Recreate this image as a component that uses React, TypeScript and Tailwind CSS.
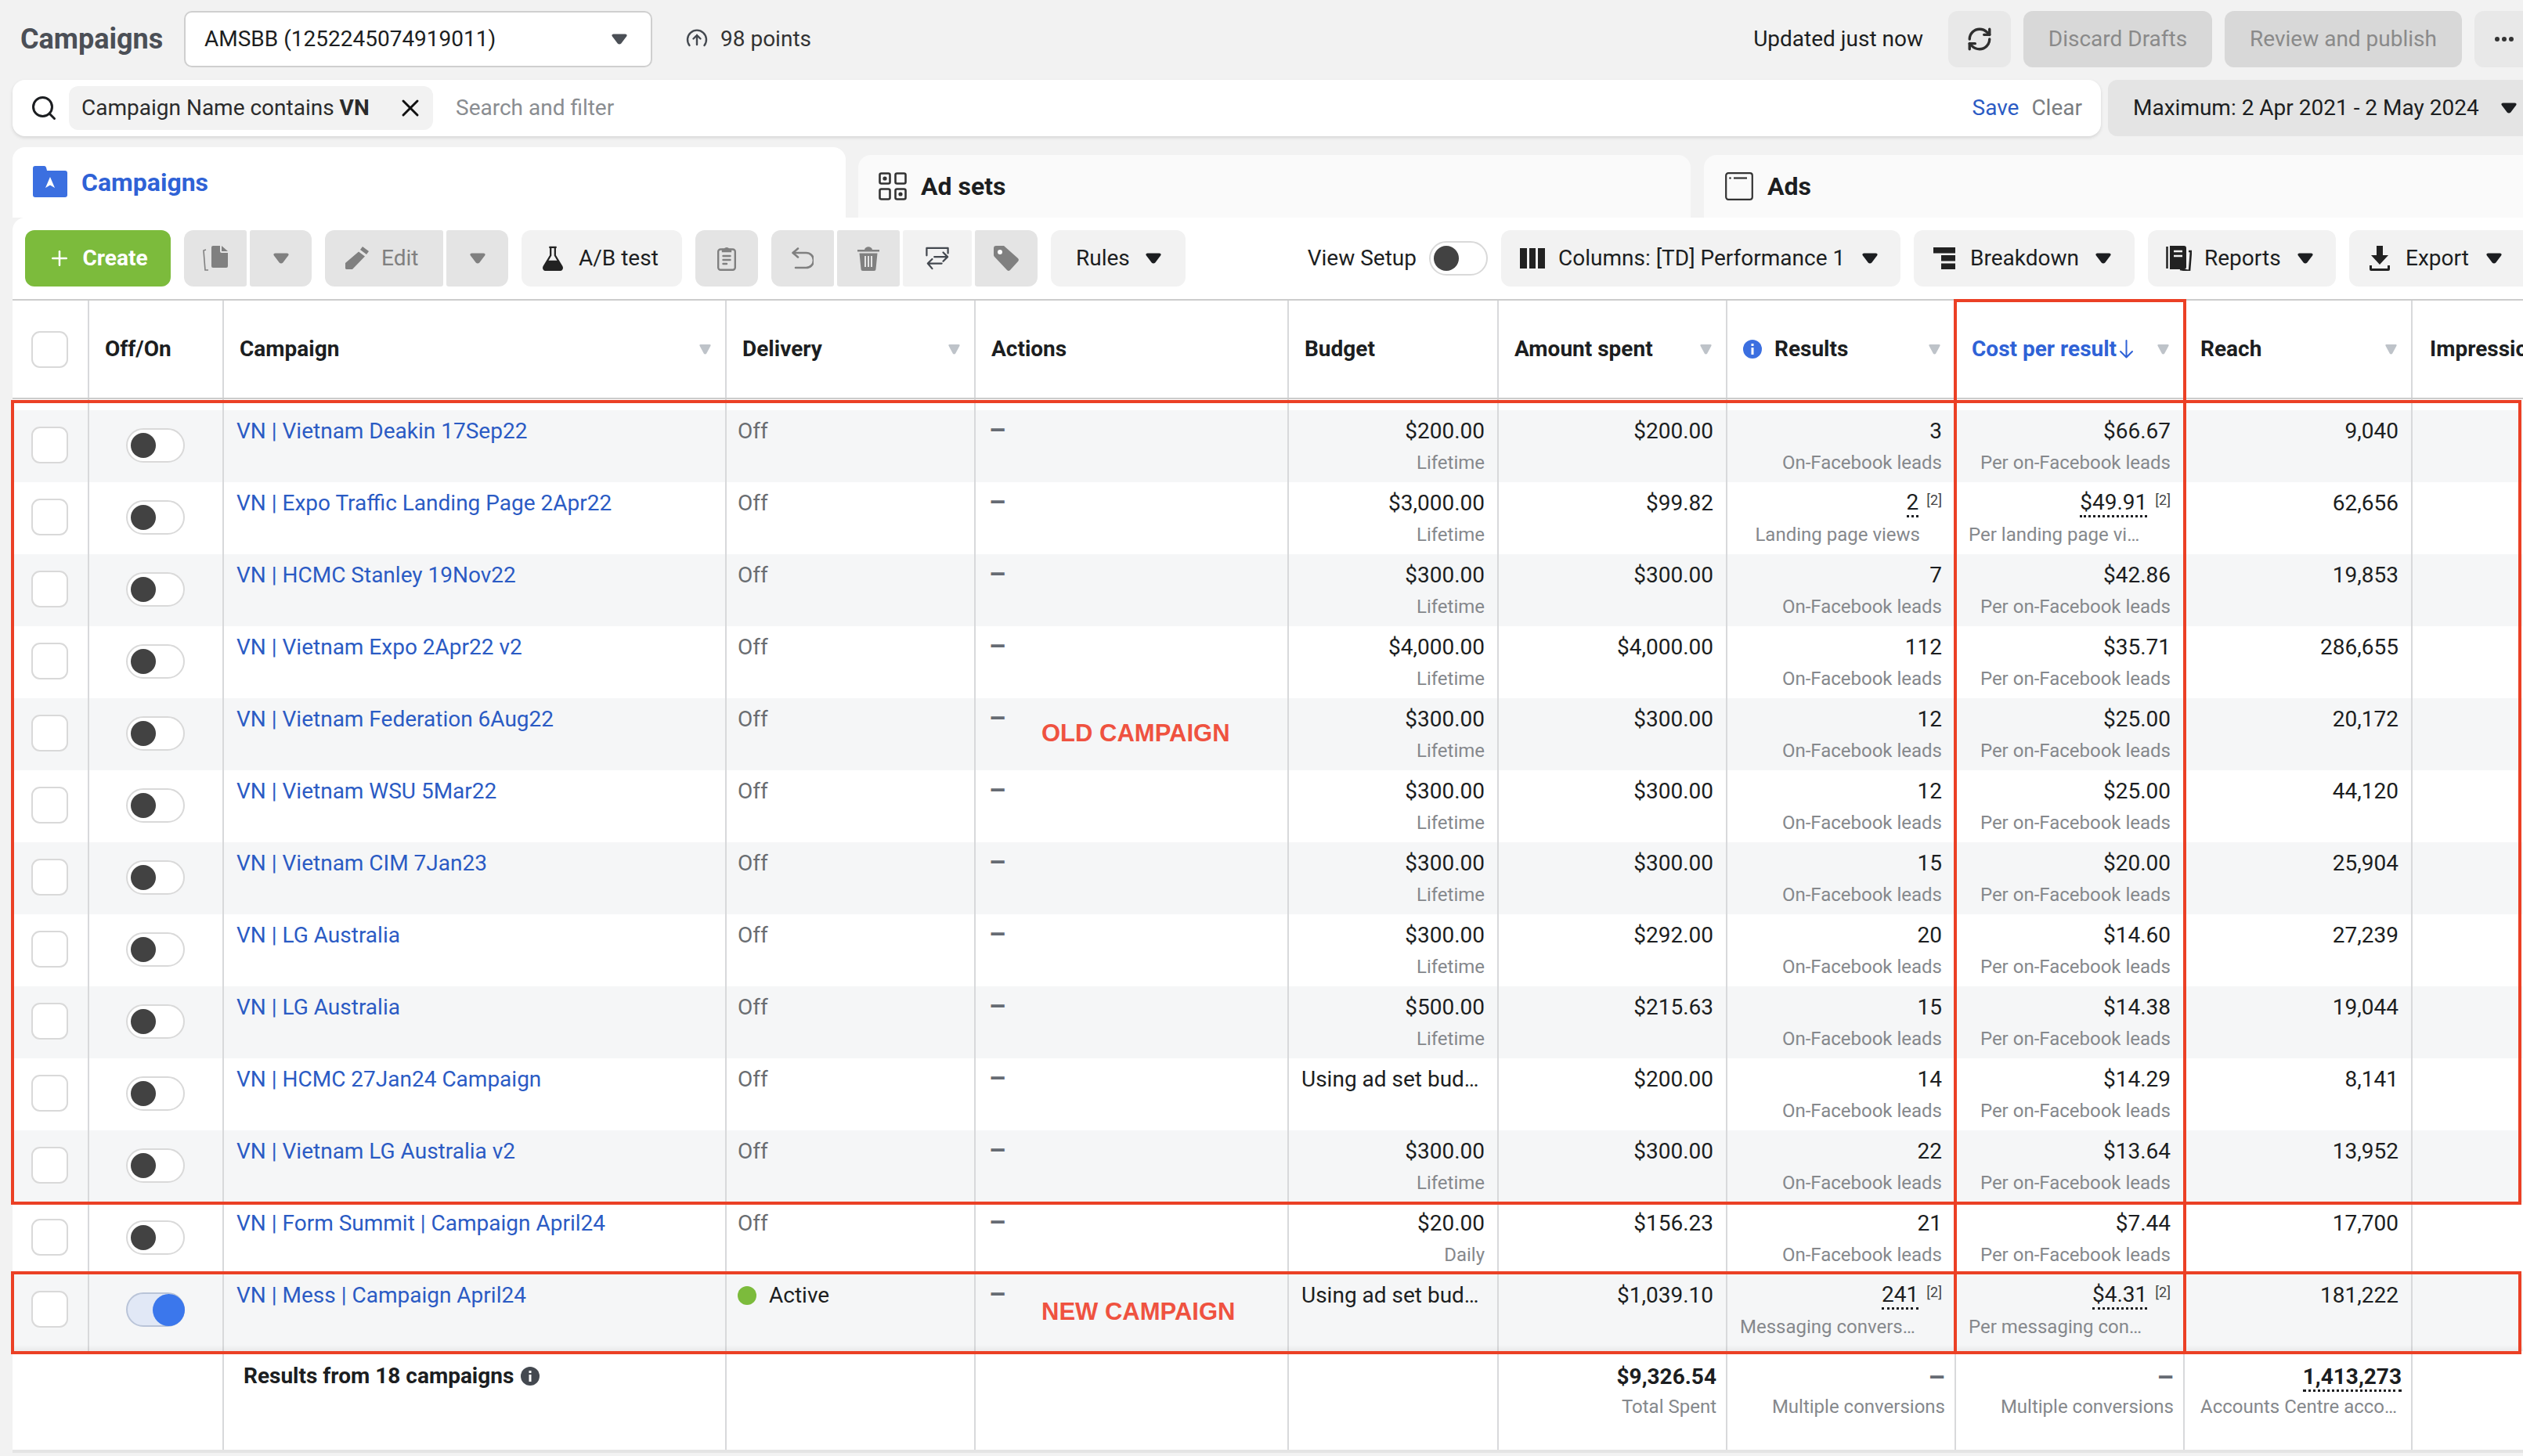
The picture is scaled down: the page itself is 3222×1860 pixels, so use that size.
import React from 'react';
import { Plus, RefreshCw, Search, X } from 'lucide-react';

const COLS = 'grid grid-cols-[98px_172px_642px_318px_400px_268px_292px_292px_292px_291px_141px]';
const CELL = 'border-r-2 border-[#d8d9db]';

type Row = {
  name: string;
  budget: string;
  budgetSub?: string;
  spent: string;
  results: string;
  resultsSub: string;
  cost: string;
  costSub: string;
  reach: string;
  note?: boolean;
};

const rows: Row[] = [
  { name: 'VN | Vietnam Deakin 17Sep22', budget: '$200.00', budgetSub: 'Lifetime', spent: '$200.00', results: '3', resultsSub: 'On-Facebook leads', cost: '$66.67', costSub: 'Per on-Facebook leads', reach: '9,040' },
  { name: 'VN | Expo Traffic Landing Page 2Apr22', budget: '$3,000.00', budgetSub: 'Lifetime', spent: '$99.82', results: '2', resultsSub: 'Landing page views', cost: '$49.91', costSub: 'Per landing page vi…', reach: '62,656', note: true },
  { name: 'VN | HCMC Stanley 19Nov22', budget: '$300.00', budgetSub: 'Lifetime', spent: '$300.00', results: '7', resultsSub: 'On-Facebook leads', cost: '$42.86', costSub: 'Per on-Facebook leads', reach: '19,853' },
  { name: 'VN | Vietnam Expo 2Apr22 v2', budget: '$4,000.00', budgetSub: 'Lifetime', spent: '$4,000.00', results: '112', resultsSub: 'On-Facebook leads', cost: '$35.71', costSub: 'Per on-Facebook leads', reach: '286,655' },
  { name: 'VN | Vietnam Federation 6Aug22', budget: '$300.00', budgetSub: 'Lifetime', spent: '$300.00', results: '12', resultsSub: 'On-Facebook leads', cost: '$25.00', costSub: 'Per on-Facebook leads', reach: '20,172' },
  { name: 'VN | Vietnam WSU 5Mar22', budget: '$300.00', budgetSub: 'Lifetime', spent: '$300.00', results: '12', resultsSub: 'On-Facebook leads', cost: '$25.00', costSub: 'Per on-Facebook leads', reach: '44,120' },
  { name: 'VN | Vietnam CIM 7Jan23', budget: '$300.00', budgetSub: 'Lifetime', spent: '$300.00', results: '15', resultsSub: 'On-Facebook leads', cost: '$20.00', costSub: 'Per on-Facebook leads', reach: '25,904' },
  { name: 'VN | LG Australia', budget: '$300.00', budgetSub: 'Lifetime', spent: '$292.00', results: '20', resultsSub: 'On-Facebook leads', cost: '$14.60', costSub: 'Per on-Facebook leads', reach: '27,239' },
  { name: 'VN | LG Australia', budget: '$500.00', budgetSub: 'Lifetime', spent: '$215.63', results: '15', resultsSub: 'On-Facebook leads', cost: '$14.38', costSub: 'Per on-Facebook leads', reach: '19,044' },
  { name: 'VN | HCMC 27Jan24 Campaign', budget: 'Using ad set bud…', spent: '$200.00', results: '14', resultsSub: 'On-Facebook leads', cost: '$14.29', costSub: 'Per on-Facebook leads', reach: '8,141' },
  { name: 'VN | Vietnam LG Australia v2', budget: '$300.00', budgetSub: 'Lifetime', spent: '$300.00', results: '22', resultsSub: 'On-Facebook leads', cost: '$13.64', costSub: 'Per on-Facebook leads', reach: '13,952' },
  { name: 'VN | Form Summit | Campaign April24', budget: '$20.00', budgetSub: 'Daily', spent: '$156.23', results: '21', resultsSub: 'On-Facebook leads', cost: '$7.44', costSub: 'Per on-Facebook leads', reach: '17,700' },
  { name: 'VN | Mess | Campaign April24', budget: 'Using ad set bud…', spent: '$1,039.10', results: '241', resultsSub: 'Messaging convers…', cost: '$4.31', costSub: 'Per messaging con…', reach: '181,222', note: true },
];

// ellipsised labels sit flush left in the real table
const cut = (s?: string) => !!s && s.endsWith('…');

function Caret({ color = '#1c1e21', className = '' }: { color?: string; className?: string }) {
  return (
    <svg viewBox="0 0 20 14" className={`h-[14px] w-[20px] shrink-0 ${className}`}>
      <path d="M2.5 0.5h15c2 0 2.6 1.6 1.6 3l-6.8 9c-1.2 1.4-3.4 1.4-4.6 0l-6.8-9c-1-1.4-0.4-3 1.6-3z" fill={color} />
    </svg>
  );
}

function SortCaret() {
  return (
    <svg viewBox="0 0 15 14" className="h-[14px] w-[15px]">
      <path d="M1.5 1h12c1 0 1.4 0.8 1 1.8l-5.4 10c-0.7 1-2.5 1-3.2 0l-5.4-10c-0.4-1 0-1.8 1-1.8z" fill="#bec3c9" />
    </svg>
  );
}

function Btn({ w, light, round = 'rounded-xl', className = '', children }: { w: string; light?: boolean; round?: string; className?: string; children?: React.ReactNode }) {
  return (
    <div className={`flex h-[72px] shrink-0 items-center ${w} ${round} ${light ? 'bg-[#f2f2f2]' : 'bg-[#e4e4e4]'} ${className}`}>
      {children}
    </div>
  );
}

function Toggle({ on }: { on?: boolean }) {
  if (on) {
    return (
      <div className="flex h-[44px] w-[75px] items-center justify-end rounded-full border-2 border-[#b9c4d8] bg-[#e1e8f6]">
        <div className="-mr-[2px] h-[41px] w-[41px] rounded-full bg-[#3b77ec]" />
      </div>
    );
  }
  return (
    <div className="flex h-[44px] w-[75px] items-center rounded-full border-2 border-[#d9d9d9] bg-white pl-[4px]">
      <div className="h-[32px] w-[32px] rounded-full bg-[#424242]" />
    </div>
  );
}

function Checkbox() {
  return <div className="h-[47px] w-[47px] rounded-[11px] border-2 border-[#d9d9d9] bg-white" />;
}

function Num({ value, note }: { value: string; note?: boolean }) {
  if (!note) return <div className={`h-[36px] text-[28px] leading-[36px] text-[#1c1e21] ${cut(value) ? 'pl-[4px] text-left' : ''}`}>{value}</div>;
  return (
    <div className="flex h-[36px] items-start justify-end gap-[10px] text-[28px] leading-[36px] text-[#1c1e21]">
      <span className="h-[36px] border-b-[3px] border-dotted border-[#1c1e21] leading-[34px]">{value}</span>
      <span className="mt-[-4px] text-[18px] leading-[36px] text-[#444]">[2]</span>
    </div>
  );
}

function MetricCell({ value, sub, note }: { value: string; sub?: string; note?: boolean }) {
  return (
    <div className={`pl-[12px] pr-[16px] pt-[9px] text-right ${CELL}`}>
      <Num value={value} note={note} />
      {sub && (
        <div className={`mt-[6px] whitespace-nowrap text-[24px] leading-[32px] text-[#85888c] ${cut(sub) ? 'pl-[4px] text-left' : note ? 'pr-[28px]' : ''}`}>{sub}</div>
      )}
    </div>
  );
}

function HeaderCell({ label, sort = true, className = '', children }: { label?: string; sort?: boolean; className?: string; children?: React.ReactNode }) {
  return (
    <div className={`flex items-center justify-between pl-[20px] pr-[18px] ${CELL} ${className}`}>
      <div className="flex items-center whitespace-nowrap text-[28px] font-bold text-[#1c1e21]">
        {children}
        {label}
      </div>
      {sort && <SortCaret />}
    </div>
  );
}

function FooterCell({ value, sub, strong, dotted }: { value: string; sub: string; strong?: boolean; dotted?: boolean }) {
  return (
    <div className={`pl-[20px] pr-[12px] pt-[15px] text-right ${CELL}`}>
      <div className="h-[36px] text-[28px] leading-[36px]">
        {strong ? (
          <span className={`font-bold text-[#1c1e21] ${dotted ? 'border-b-[3px] border-dotted border-[#1c1e21]' : ''}`}>{value}</span>
        ) : (
          <span className="text-[34px] font-bold text-[#666b73]">{value}</span>
        )}
      </div>
      <div className={`mt-[4px] whitespace-nowrap text-[24px] leading-[32px] text-[#85888c] ${cut(sub) ? 'text-left' : ''}`}>{sub}</div>
    </div>
  );
}

export default function App() {
  return (
    <div className="relative h-[1860px] w-[3222px] overflow-hidden bg-[#f2f2f2] font-[family-name:Roboto,sans-serif] text-[#1c1e21]">
      {/* top bar */}
      <div className="flex h-[102px] items-start pt-[14px]">
        <div className="ml-[26px] flex h-[72px] w-[209px] items-center text-[36px] font-bold text-[#4b4f56]">Campaigns</div>
        <div className="flex h-[72px] w-[598px] items-center justify-between rounded-[10px] border-2 border-[#cfcfcf] bg-white pl-[24px] pr-[30px] text-[28px]">
          AMSBB (1252245074919011)
          <Caret color="#4b4f56" />
        </div>
        <div className="ml-[43px] flex h-[72px] items-center text-[28px] text-[#333]">
          <svg viewBox="0 0 28 28" className="mr-[16px] h-[28px] w-[28px]" fill="none" stroke="#444950" strokeWidth="2.4" strokeLinecap="round">
            <path d="M4.5 22a12 12 0 1 1 19 0" />
            <path d="M14 21V9M9.5 13.5 14 9l4.5 4.5" />
          </svg>
          98 points
        </div>
        <div className="ml-auto flex h-[72px] items-center text-[28px]">Updated just now</div>
        <Btn w="w-[80px]" className="ml-[32px] justify-center !bg-[#e8e8e8]">
          <RefreshCw size={34} strokeWidth={2.4} color="#2f2f2f" />
        </Btn>
        <Btn w="w-[241px]" className="ml-[16px] justify-center !bg-[#d8d8d8] text-[28px] text-[#8a8a8a]">Discard Drafts</Btn>
        <Btn w="w-[303px]" className="ml-[16px] justify-center !bg-[#d8d8d8] text-[28px] text-[#8a8a8a]">Review and publish</Btn>
        <Btn w="w-[62px]" round="rounded-l-xl" className="ml-[16px] justify-start gap-[3px] !bg-[#e8e8e8] pl-[26px]">
          <span className="h-[6px] w-[6px] rounded-full bg-[#333]" />
          <span className="h-[6px] w-[6px] rounded-full bg-[#333]" />
          <span className="h-[6px] w-[6px] rounded-full bg-[#333]" />
        </Btn>
      </div>

      {/* search */}
      <div className="flex h-[72px] pl-[16px]">
        <div className="flex w-[2667px] items-center rounded-2xl bg-white pr-[24px] shadow-[0_2px_4px_rgba(0,0,0,0.12)]">
          <Search size={36} strokeWidth={2} className="ml-[22px] mr-[14px]" color="#1c1e21" />
          <div className="flex h-[56px] w-[465px] items-center rounded-xl bg-[#f2f2f2] pl-[16px] text-[28px] text-[#2b2b2b]">
            Campaign Name contains&nbsp;<b>VN</b>
            <X size={36} strokeWidth={2} className="ml-[34px]" color="#111" />
          </div>
          <div className="ml-[29px] text-[28px] text-[#8a8d91]">Search and filter</div>
          <div className="ml-auto text-[28px] text-[#2b5bc4]">Save</div>
          <div className="ml-[16px] text-[28px] text-[#7a7d81]">Clear</div>
        </div>
        <div className="ml-[9px] flex flex-1 items-center rounded-l-xl bg-[#e4e4e4] pl-[32px] text-[28px]">
          Maximum: 2 Apr 2021 - 2 May 2024
          <Caret className="ml-[28px]" />
        </div>
      </div>

      {/* tabs */}
      <div className="flex h-[104px] items-end pb-0 pl-[16px]">
        <div className="flex h-[90px] w-[1064px] items-start rounded-t-2xl bg-white pl-[26px] pt-[24px]">
          <svg viewBox="0 0 44 40" className="h-[40px] w-[44px]">
            <path d="M0 3a3 3 0 0 1 3-3h11a3 3 0 0 1 3 2l1 4h23a3 3 0 0 1 3 3v28a3 3 0 0 1-3 3H3a3 3 0 0 1-3-3z" fill="#3b6fe0" />
            <path d="M22 14l6 14-6-3.5-6 3.5z" fill="#fff" />
          </svg>
          <span className="ml-[18px] text-[32px] font-bold leading-[42px] text-[#2f62d6]">Campaigns</span>
        </div>
        <div className="ml-[16px] flex h-[80px] w-[1063px] items-start rounded-t-2xl bg-[#fafafa] pl-[26px] pt-[22px]">
          <svg viewBox="0 0 36 36" className="h-[36px] w-[36px]" fill="none" stroke="#333" strokeWidth="2.6">
            <rect x="1.5" y="1.5" width="13" height="13" rx="2" />
            <rect x="21.5" y="1.5" width="13" height="13" rx="2" />
            <rect x="1.5" y="21.5" width="13" height="13" rx="2" />
            <rect x="21.5" y="21.5" width="13" height="13" rx="2" />
            <circle cx="8" cy="8" r="2.6" fill="#333" stroke="none" />
            <circle cx="28" cy="28" r="2.6" fill="#333" stroke="none" />
          </svg>
          <span className="ml-[18px] text-[32px] font-bold leading-[36px]">Ad sets</span>
        </div>
        <div className="ml-[17px] flex h-[80px] flex-1 items-start rounded-tl-2xl bg-[#fafafa] pl-[27px] pt-[22px]">
          <svg viewBox="0 0 36 36" className="h-[36px] w-[36px]" fill="none" stroke="#333" strokeWidth="2.2">
            <rect x="1.2" y="1.2" width="33.6" height="33.6" rx="3" />
            <circle cx="6.5" cy="7.5" r="1.3" fill="#333" stroke="none" />
            <path d="M11 7.5h17" />
          </svg>
          <span className="ml-[18px] text-[32px] font-bold leading-[36px]">Ads</span>
        </div>
      </div>

      {/* content */}
      <div className="ml-[16px] rounded-tl-2xl bg-white">
        <div className="flex h-[104px] items-start gap-[17px] pl-[16px] pt-[16px] text-[28px]">
          <Btn w="w-[186px]" className="justify-center gap-[14px] !bg-[#7cbb3c] font-bold text-white">
            <Plus size={30} strokeWidth={2} />
            Create
          </Btn>
          <div className="flex gap-[4px]">
            <Btn w="w-[80px]" round="rounded-l-xl rounded-r-[3px]" className="justify-center">
              <svg viewBox="0 0 32 32" className="h-[32px] w-[32px]" fill="#808080">
                <path d="M11 2a2 2 0 0 1 2-2h9v7a2 2 0 0 0 2 2h8v17a2 2 0 0 1-2 2H13a2 2 0 0 1-2-2z" />
                <path d="M24 0l8 7h-8z" />
                <path d="M4 5 1 6l2 25h4" fill="none" stroke="#808080" strokeWidth="1.6" />
              </svg>
            </Btn>
            <Btn w="w-[79px]" round="rounded-r-xl rounded-l-[3px]" className="justify-center">
              <Caret color="#808080" />
            </Btn>
          </div>
          <div className="flex gap-[4px]">
            <Btn w="w-[151px]" round="rounded-l-xl rounded-r-[3px]" className="pl-[26px] text-[#808080]">
              <svg viewBox="0 0 30 30" className="mr-[16px] h-[30px] w-[30px]" fill="#808080">
                <path d="M22 0l8 6-3 4-8-6zM17 6.5l8 6L9 29H1l-1-1v-7z" />
              </svg>
              Edit
            </Btn>
            <Btn w="w-[79px]" round="rounded-r-xl rounded-l-[3px]" className="justify-center">
              <Caret color="#808080" />
            </Btn>
          </div>
          <Btn w="w-[205px]" light className="pl-[26px]">
            <svg viewBox="0 0 28 34" className="mr-[19px] h-[32px] w-[28px]">
              <path d="M9 2h10M11 2v11L2 28c-1.400 2.500 0 5 3 5h18c3 0 4.400-2.500 3-5l-9-15V2" fill="none" stroke="#222" strokeWidth="2.4" />
              <path d="M7 20h14l5 9c1 2 0 4-3 4H5c-3 0-4-2-3-4z" fill="#222" />
            </svg>
            A/B test
          </Btn>
          <Btn w="w-[80px]" className="justify-center">
            <svg viewBox="0 0 24 32" className="h-[32px] w-[24px]" fill="none" stroke="#808080" strokeWidth="2.4" strokeLinecap="round">
              <rect x="1.200" y="4.500" width="21.600" height="26.300" rx="3" />
              <path d="M7 7V5h2.500a2.600 2.600 0 0 1 5 0H17v2z" fill="#808080" />
              <path d="M7.500 13h9M7.500 18h9M7.500 23h4.500" />
            </svg>
          </Btn>
          <div className="flex gap-[4px]">
            <Btn w="w-[80px]" round="rounded-l-xl rounded-r-[3px]" className="justify-center">
              <svg viewBox="0 0 28 28" className="h-[28px] w-[28px]" fill="none" stroke="#808080" strokeWidth="2.6" strokeLinecap="round" strokeLinejoin="round">
                <path d="M8 1.500 1.500 7 8 12.500M2 7h16.500a8 8 0 0 1 0 19H5" />
              </svg>
            </Btn>
            <Btn w="w-[80px]" round="rounded-[3px]" className="justify-center">
              <svg viewBox="0 0 28 32" className="h-[32px] w-[28px]" fill="#808080">
                <path d="M0 5h28v2.500H0zM9 5c1-5 9-5 10 0zM2.500 9.500h23l-2 20a2.500 2.500 0 0 1-2.500 2.500H7a2.500 2.500 0 0 1-2.500-2.500z" />
                <path d="M10 13v14M14 13v14M18 13v14" stroke="#e4e4e4" strokeWidth="2" />
              </svg>
            </Btn>
            <Btn w="w-[88px]" light round="rounded-[3px]" className="justify-center">
              <svg viewBox="0 0 32 32" className="h-[30px] w-[30px]" fill="none" stroke="#444950" strokeWidth="2.400" strokeLinecap="round" strokeLinejoin="round">
                <path d="M1.500 12V2h29v7" />
                <path d="M12 14h18M24 8l6 6-6 6" />
                <path d="M22 23H3M9 17l-6 6 6 7" />
              </svg>
            </Btn>
            <Btn w="w-[80px]" round="rounded-r-xl rounded-l-[3px]" className="justify-center">
              <svg viewBox="0 0 32 32" className="h-[32px] w-[32px]">
                <path d="M0 3a3 3 0 0 1 3-3h10l18 16a3 3 0 0 1 0 4L21 31a3 3 0 0 1-4 0L1 14a3 3 0 0 1-1-2z" fill="#808080" />
                <circle cx="8" cy="8" r="3" fill="#fff" />
              </svg>
            </Btn>
          </div>
          <Btn w="w-[172px]" light className="justify-between pl-[32px] pr-[31px]">
            Rules
            <Caret />
          </Btn>
          <div className="ml-auto flex h-[72px] items-center">
            <span className="mr-[16px]">View Setup</span>
            <Toggle />
          </div>
          <Btn w="w-[510px]" light className="pl-[24px]">
            <div className="mr-[17px] flex h-[26px] w-[32px] gap-[3px]">
              <div className="flex-1 bg-[#222]" />
              <div className="flex-1 bg-[#222]" />
              <div className="flex-1 bg-[#222]" />
            </div>
            Columns: [TD] Performance 1
            <Caret className="ml-[22px]" />
          </Btn>
          <Btn w="w-[282px]" light className="pl-[25px]">
            <svg viewBox="0 0 28 28" className="mr-[19px] h-[28px] w-[28px]" fill="#222">
              <path d="M0 0h28v7.500H0zM10 10h18v7.500H10zM10 20.500h18V28H10z" />
            </svg>
            Breakdown
            <Caret className="ml-[21px]" />
          </Btn>
          <Btn w="w-[240px]" light className="pl-[23px]">
            <svg viewBox="0 0 33 32" className="mr-[16px] h-[32px] w-[33px]">
              <path d="M5 0h18a3 3 0 0 1 3 3v24a3 3 0 0 1-3 3H5z" fill="#222" />
              <path d="M1.500 1v28" stroke="#222" strokeWidth="2.500" />
              <path d="M10 7h11M10 13h11" stroke="#f2f2f2" strokeWidth="2.500" />
              <path d="M29 7h3l-2 25-12-2" fill="none" stroke="#222" strokeWidth="2.600" />
            </svg>
            Reports
            <Caret className="ml-[21px]" />
          </Btn>
          <Btn w="w-[240px]" light className="-mr-[18px] pl-[26px]">
            <svg viewBox="0 0 26 32" className="mr-[20px] h-[32px] w-[26px]" fill="#222">
              <path d="M9 0h8v12h7L13 24 2 12h7z" />
              <path d="M0 25v5a2 2 0 0 0 2 2h22a2 2 0 0 0 2-2v-5h-3v4H3v-4z" />
            </svg>
            Export
            <Caret className="ml-[22px]" />
          </Btn>
        </div>

        {/* table head */}
        <div className={`${COLS} h-[128px] border-t-2 border-b-2 border-t-[#cccccc] border-b-[#cccccc]`}>
          <div className={`flex items-center pl-[24px] ${CELL}`}>
            <Checkbox />
          </div>
          <HeaderCell label="Off/On" sort={false} />
          <HeaderCell label="Campaign" />
          <HeaderCell label="Delivery" />
          <HeaderCell label="Actions" sort={false} />
          <HeaderCell label="Budget" sort={false} />
          <HeaderCell label="Amount spent" />
          <HeaderCell label="Results">
            <svg viewBox="0 0 24 24" className="mr-[16px] h-[24px] w-[24px]">
              <circle cx="12" cy="12" r="12" fill="#3b6fe0" />
              <path d="M10.500 10h3v9h-3zM10.500 5h3v3h-3z" fill="#fff" />
            </svg>
          </HeaderCell>
          <div className={`flex items-center justify-between pl-[20px] pr-[18px] ${CELL}`}>
            <span className="whitespace-nowrap text-[28px] font-bold text-[#2f62d6]">Cost per result</span>
            <svg viewBox="0 0 19 24" className="ml-[3px] mr-auto h-[24px] w-[19px]" fill="none" stroke="#2f62d6" strokeWidth="2" strokeLinecap="round" strokeLinejoin="round">
              <path d="M9.500 1v21M2 15l7.500 7.500L17 15" />
            </svg>
            <SortCaret />
          </div>
          <HeaderCell label="Reach" />
          <HeaderCell label="Impressions" sort={false} className="overflow-hidden !border-r-0 !pl-[22px]" />
        </div>

        {/* gap under the head */}
        <div className={`${COLS} h-[14px]`}>
          {Array.from({ length: 10 }).map((_, i) => (
            <div key={i} className={CELL} />
          ))}
        </div>

        {/* rows */}
        {rows.map((r, i) => {
          const last = i === rows.length - 1;
          return (
            <div key={i} className={`${COLS} relative ${last ? 'h-[98px]' : 'h-[92px]'} ${i % 2 === 0 ? 'bg-[#f5f6f7]' : 'bg-white'}`}>
              <div className={`pl-[24px] pt-[21px] ${CELL}`}>
                <Checkbox />
              </div>
              <div className={`pl-[47px] pt-[23px] ${CELL}`}>
                <Toggle on={last} />
              </div>
              <div className={`overflow-hidden whitespace-nowrap pl-[16px] pt-[9px] text-[28px] leading-[36px] text-[#2b5bc4] ${CELL}`}>{r.name}</div>
              <div className={`pl-[14px] pt-[9px] text-[28px] leading-[36px] ${CELL}`}>
                {last ? (
                  <div className="flex items-center text-[#1c1e21]">
                    <span className="mr-[16px] h-[24px] w-[24px] rounded-full bg-[#7cbb3c]" />
                    Active
                  </div>
                ) : (
                  <span className="text-[#6a6d71]">Off</span>
                )}
              </div>
              <div className={`pl-[17px] pt-[7px] text-[34px] font-bold leading-[36px] text-[#666b73] ${CELL}`}>–</div>
              <MetricCell value={r.budget} sub={r.budgetSub} />
              <MetricCell value={r.spent} />
              <MetricCell value={r.results} sub={r.resultsSub} note={r.note} />
              <MetricCell value={r.cost} sub={r.costSub} note={r.note} />
              <MetricCell value={r.reach} />
              <div />
              {last && <div className="absolute inset-x-0 bottom-0 h-[8px] bg-gradient-to-b from-transparent to-black/5" />}
            </div>
          );
        })}

        {/* totals */}
        <div className={`${COLS} h-[130px] border-b-4 border-[#e4e4e4]`}>
          <div className={`col-span-2 ${CELL}`} />
          <div className={`flex items-start pl-[25px] pt-[14px] text-[28px] font-bold leading-[36px] ${CELL}`}>
            Results from 18 campaigns
            <svg viewBox="0 0 24 24" className="ml-[9px] mt-[6px] h-[24px] w-[24px]">
              <circle cx="12" cy="12" r="12" fill="#444950" />
              <path d="M10.500 10h3v9h-3zM10.500 5h3v3h-3z" fill="#fff" />
            </svg>
          </div>
          <div className={CELL} />
          <div className={CELL} />
          <div className={CELL} />
          <FooterCell value="$9,326.54" sub="Total Spent" strong />
          <FooterCell value="–" sub="Multiple conversions" />
          <FooterCell value="–" sub="Multiple conversions" />
          <FooterCell value="1,413,273" sub="Accounts Centre acco…" strong dotted />
        </div>
      </div>

      {/* annotations drawn on top of the screenshot */}
      <div className="pointer-events-none absolute left-[14px] top-[511px] h-[1028px] w-[3206px] border-4 border-[#eb4025]" />
      <div className="pointer-events-none absolute left-[14px] top-[1624px] h-[106px] w-[3206px] border-4 border-[#eb4025]" />
      <div className="pointer-events-none absolute left-[2495px] top-[382px] h-[1348px] w-[297px] border-4 border-[#eb4025]" />
      <div className="absolute left-[1330px] top-[918px] font-[family-name:'Liberation_Sans',sans-serif] text-[31px] font-bold leading-[38px] text-[#ef5240]">OLD CAMPAIGN</div>
      <div className="absolute left-[1330px] top-[1657px] font-[family-name:'Liberation_Sans',sans-serif] text-[31px] font-bold leading-[38px] text-[#ef5240]">NEW CAMPAIGN</div>
    </div>
  );
}
